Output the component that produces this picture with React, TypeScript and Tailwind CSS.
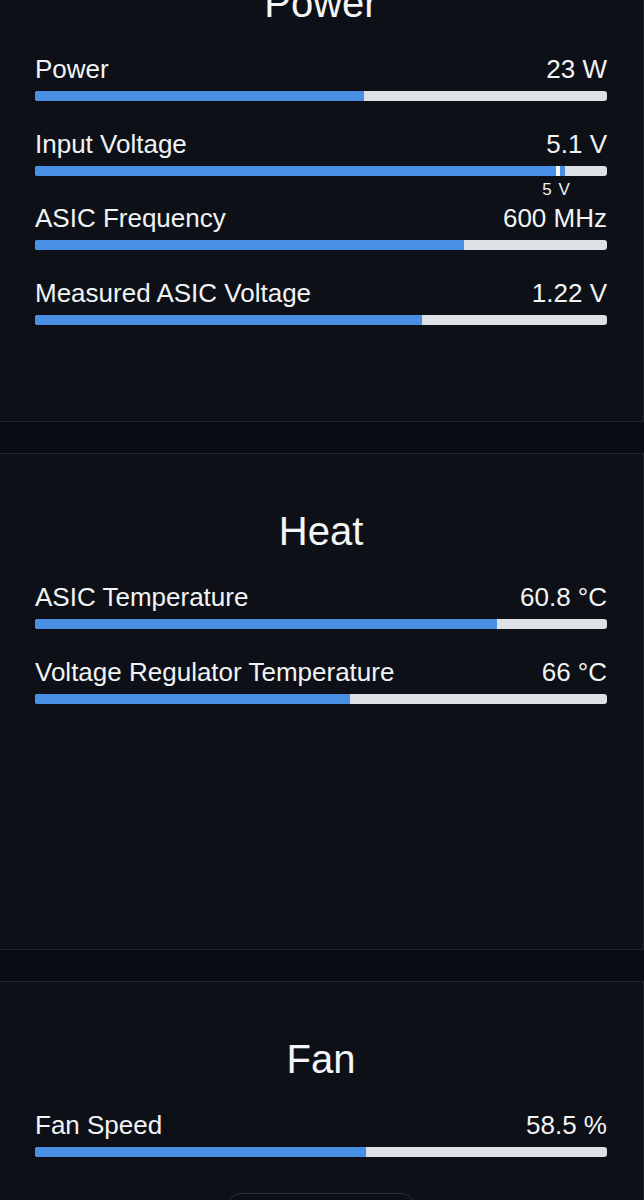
import React from "react";

type Row = {
  label: string;
  value: string;
  pct: number;
  marker?: { pct: number; label: string };
};

type Section = { title: string; rows: Row[]; button?: boolean };

const sections: Section[] = [
  {
    title: "Power",
    rows: [
      { label: "Power", value: "23 W", pct: 57.5 },
      { label: "Input Voltage", value: "5.1 V", pct: 92.7, marker: { pct: 91, label: "5 V" } },
      { label: "ASIC Frequency", value: "600 MHz", pct: 75 },
      { label: "Measured ASIC Voltage", value: "1.22 V", pct: 67.7 },
    ],
  },
  {
    title: "Heat",
    rows: [
      { label: "ASIC Temperature", value: "60.8 °C", pct: 80.8 },
      { label: "Voltage Regulator Temperature", value: "66 °C", pct: 55 },
    ],
  },
  {
    title: "Fan",
    rows: [{ label: "Fan Speed", value: "58.5 %", pct: 57.9 }],
    button: true,
  },
];

function Bar({ row }: { row: Row }) {
  return (
    <div className="relative mt-[7px] h-[10px] w-full rounded-[3px] bg-[#dde1e5]">
      <div
        className="h-full rounded-l-[3px] bg-[#4a8fe6]"
        style={{ width: `${row.pct}%` }}
      />
      {row.marker && (
        <>
          <div
            className="absolute top-0 h-full w-[4px] bg-[#f4f6f8]"
            style={{ left: `${row.marker.pct}%` }}
          />
          <div
            className="absolute top-[12px] -translate-x-1/2 text-[17px] leading-[24px] tracking-[1px] text-[#eef0f2] whitespace-nowrap"
            style={{ left: `calc(${row.marker.pct}% + 1px)` }}
          >
            {row.marker.label}
          </div>
        </>
      )}
    </div>
  );
}

function Card({ section }: { section: Section }) {
  return (
    <div className="box-border flex h-[497px] flex-col border-y border-r border-[#21262d] bg-[#0d1117] pt-[57px] pl-[35px] pr-[36px]">
      <h2 className="text-center text-[40px] leading-[40px] text-[#f4f5f6]">
        {section.title}
      </h2>
      <div className="mt-[31px] flex flex-col gap-[27.5px]">
        {section.rows.map((row) => (
          <div key={row.label} className="flex flex-col">
            <div className="flex h-[30px] items-center justify-between text-[26px] leading-[30px] text-[#f2f3f5]">
              <span>{row.label}</span>
              <span>{row.value}</span>
            </div>
            <Bar row={row} />
          </div>
        ))}
      </div>
      {section.button && (
        <div className="mx-auto mt-[36px] h-[44px] w-[188px] rounded-[14px] border border-[#2b3038] bg-[#0b0f15]" />
      )}
    </div>
  );
}

export default function App() {
  return (
    <div
      className="h-[1200px] w-[644px] overflow-hidden bg-[#090c14]"
      style={{ fontFamily: '"Liberation Sans", Arial, sans-serif' }}
    >
      <div className="-mt-[75px] flex flex-col gap-[31px]">
        {sections.map((s) => (
          <Card key={s.title} section={s} />
        ))}
      </div>
    </div>
  );
}
